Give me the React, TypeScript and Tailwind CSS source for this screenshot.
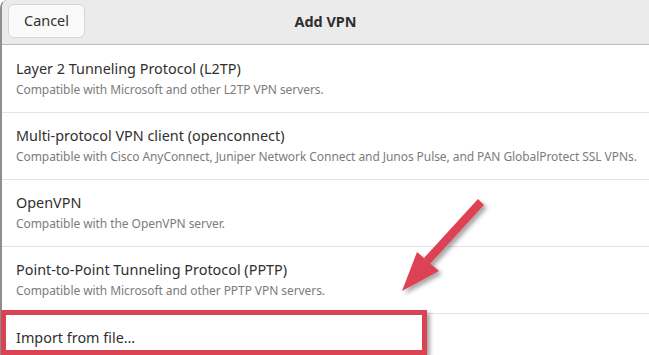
import React from "react";

const font = { fontFamily: '"Noto Sans", "Open Sans", sans-serif' };

type Vpn = { title: string; desc: string };

const items: Vpn[] = [
  { title: "Layer 2 Tunneling Protocol (L2TP)", desc: "Compatible with Microsoft and other L2TP VPN servers." },
  {
    title: "Multi-protocol VPN client (openconnect)",
    desc: "Compatible with Cisco AnyConnect, Juniper Network Connect and Junos Pulse, and PAN GlobalProtect SSL VPNs.",
  },
  { title: "OpenVPN", desc: "Compatible with the OpenVPN server." },
  { title: "Point-to-Point Tunneling Protocol (PPTP)", desc: "Compatible with Microsoft and other PPTP VPN servers." },
];

function Row({ title, desc, first }: Vpn & { first?: boolean }) {
  return (
    <div className={(first ? "h-[68px] pt-[13px]" : "h-[67px] pt-[12px]") + " border-b border-[#e3e3e3] pl-[14px] flex flex-col"}>
      <div className="text-[14.4px] leading-[22px] text-[#303030]">{title}</div>
      <div className="text-[12px] leading-[20px] tracking-[-0.07px] text-[#7c7c7c]">{desc}</div>
    </div>
  );
}

export default function App() {
  return (
    <div className="relative w-[649px] h-[355px] overflow-hidden bg-white" style={font}>
      <div className="h-full border-l-2 border-[#8e8e8e] rounded-tl-[8px] overflow-hidden flex flex-col">
        <header className="relative h-[45px] shrink-0 bg-[#ebebeb] border-b border-[#bdbdbd] flex items-center px-[6px]">
          <button className="h-[34px] w-[77px] -mt-[3px] rounded-[6px] bg-[#fafafa] border border-[#d6d6d6] text-[14.4px] text-[#303030]">
            Cancel
          </button>
          <div className="absolute left-0 right-0 top-[11px] text-center text-[14.4px] font-bold text-[#2e2e2e] pointer-events-none">
            Add VPN
          </div>
        </header>
        <div className="flex flex-col">
          {items.map((it, i) => (
            <Row key={it.title} first={i === 0} {...it} />
          ))}
          <div className="h-[45px] pl-[14px] pt-[13px] text-[14.4px] leading-[22px] text-[#303030]">Import from file…</div>
        </div>
      </div>

      {/* annotation: highlight box */}
      <div className="absolute left-[1px] top-[310px] w-[426px] h-[45px] border-[5px] border-[#dc4352] shadow-[3px_3px_4px_rgba(0,0,0,0.35)]" />

      {/* annotation: arrow */}
      <svg className="absolute left-0 top-0 pointer-events-none" width="649" height="355">
        <defs>
          <filter id="sh" x="-20%" y="-20%" width="150%" height="150%">
            <feDropShadow dx="3" dy="3" stdDeviation="2" floodColor="#000" floodOpacity="0.35" />
          </filter>
        </defs>
        <g filter="url(#sh)" fill="#dc4352">
          <polygon points="478,199 484,205 430,264 424,258" />
          <polygon points="402,291 417,252 439,271" />
        </g>
      </svg>
    </div>
  );
}
